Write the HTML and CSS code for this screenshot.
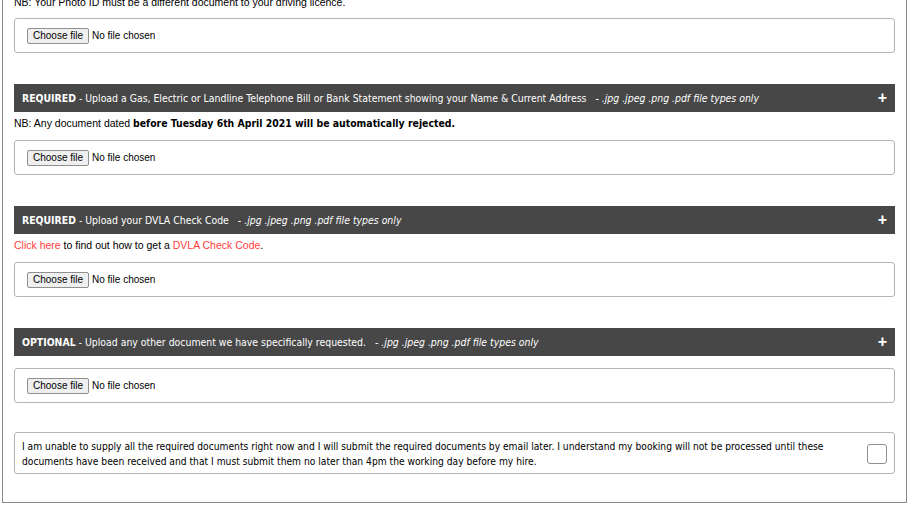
FILE: index.html
```html
<!DOCTYPE html>
<html lang="en">
<head>
    <meta charset="UTF-8">
    <meta name="viewport" content="width=device-width, initial-scale=1.0">
    <title>Upload Documents</title>
    <link rel="stylesheet" href="styles.css">
</head>
<body>
    <div class="page">
        <p class="note note-top">NB: Your Photo ID must be a different document to your driving licence.</p>
        <div class="upload">
            <button class="file-btn" type="button">Choose file</button>
            <span class="file-name">No file chosen</span>
        </div>

        <div class="section">
            <div class="bar">
                <span><b>REQUIRED</b> - Upload a Gas, Electric or Landline Telephone Bill or Bank Statement showing your Name &amp; Current Address <i class="types">- .jpg .jpeg .png .pdf file types only</i></span>
                <span class="plus">+</span>
            </div>
            <p class="note">NB: Any document dated <b class="strong">before Tuesday 6th April 2021 will be automatically rejected.</b></p>
            <div class="upload">
                <button class="file-btn" type="button">Choose file</button>
                <span class="file-name">No file chosen</span>
            </div>
        </div>

        <div class="section">
            <div class="bar">
                <span><b>REQUIRED</b> - Upload your DVLA Check Code <i class="types">- .jpg .jpeg .png .pdf file types only</i></span>
                <span class="plus">+</span>
            </div>
            <p class="note"><a href="#">Click here</a> to find out how to get a <a href="#">DVLA Check Code</a>.</p>
            <div class="upload">
                <button class="file-btn" type="button">Choose file</button>
                <span class="file-name">No file chosen</span>
            </div>
        </div>

        <div class="section">
            <div class="bar">
                <span><b>OPTIONAL</b> - Upload any other document we have specifically requested. <i class="types">- .jpg .jpeg .png .pdf file types only</i></span>
                <span class="plus">+</span>
            </div>
            <div class="upload upload-nonote">
                <button class="file-btn" type="button">Choose file</button>
                <span class="file-name">No file chosen</span>
            </div>
        </div>

        <label class="confirm">
            <span>I am unable to supply all the required documents right now and I will submit the required documents by email later. I understand my booking will not be processed until these documents have been received and that I must submit them no later than 4pm the working day before my hire.</span>
            <input type="checkbox" class="check">
        </label>
    </div>
</body>
</html>
```

FILE: styles.css
```css
body {
    margin: 0 2px;
    background-color: #fff;
    color: #000;
    font-family: "Liberation Sans", Arial, sans-serif;
    font-size: 10.5px;
}
.page {
    margin-top: -6px;
    border: 1px solid #8a8a8a;
    box-shadow: 0 1px 0 #d0d0d0;
    padding: 0 11px 28px;
}
.note {
    margin: 4px 0 0;
    line-height: 14px;
}
.note-top {
    margin: 0;
}
.note a {
    color: #ff3b3b;
    text-decoration: none;
}
.strong {
    font-family: "DejaVu Sans", Verdana, sans-serif;
    font-stretch: condensed;
    font-size: 10.4px;
}
.upload {
    display: flex;
    align-items: center;
    height: 33px;
    margin-top: 10px;
    padding-left: 12px;
    border: 1px solid #b5b5b5;
    border-radius: 3px;
}
.note-top + .upload {
    margin-top: 9px;
}
.upload-nonote {
    margin-top: 12px;
}
.file-btn {
    height: 16px;
    padding: 0 5px;
    margin: 0 3px 0 0;
    font-family: "Liberation Sans", Arial, sans-serif;
    font-size: 10px;
    color: #000;
    background-color: #efefef;
    border: 1px solid #8f8f8f;
    border-radius: 2px;
}
.file-name {
    font-size: 10px;
}
.section {
    margin-top: 31px;
}
.bar {
    display: flex;
    justify-content: space-between;
    align-items: center;
    height: 28px;
    padding: 0 8px;
    background-color: #474747;
    color: #fff;
    font-family: "DejaVu Sans", Tahoma, sans-serif;
    font-stretch: condensed;
    font-size: 10.4px;
    white-space: nowrap;
}
.bar b {
    font-weight: bold;
}
.types {
    margin-left: 6px;
}
.plus {
    font-family: "Liberation Sans", Arial, sans-serif;
    font-size: 16px;
    font-weight: bold;
}
.confirm {
    display: flex;
    align-items: center;
    justify-content: space-between;
    gap: 12px;
    margin-top: 29px;
    padding: 6px 7px 4px 7px;
    border: 1px solid #b5b5b5;
    border-radius: 3px;
    font-family: "DejaVu Sans", Tahoma, sans-serif;
    font-stretch: condensed;
    font-size: 10.2px;
    line-height: 15px;
}
.check {
    appearance: none;
    flex: none;
    width: 20px;
    height: 20px;
    margin: 0;
    border: 1px solid #8f8f8f;
    border-radius: 3px;
    background-color: #fff;
}
```
